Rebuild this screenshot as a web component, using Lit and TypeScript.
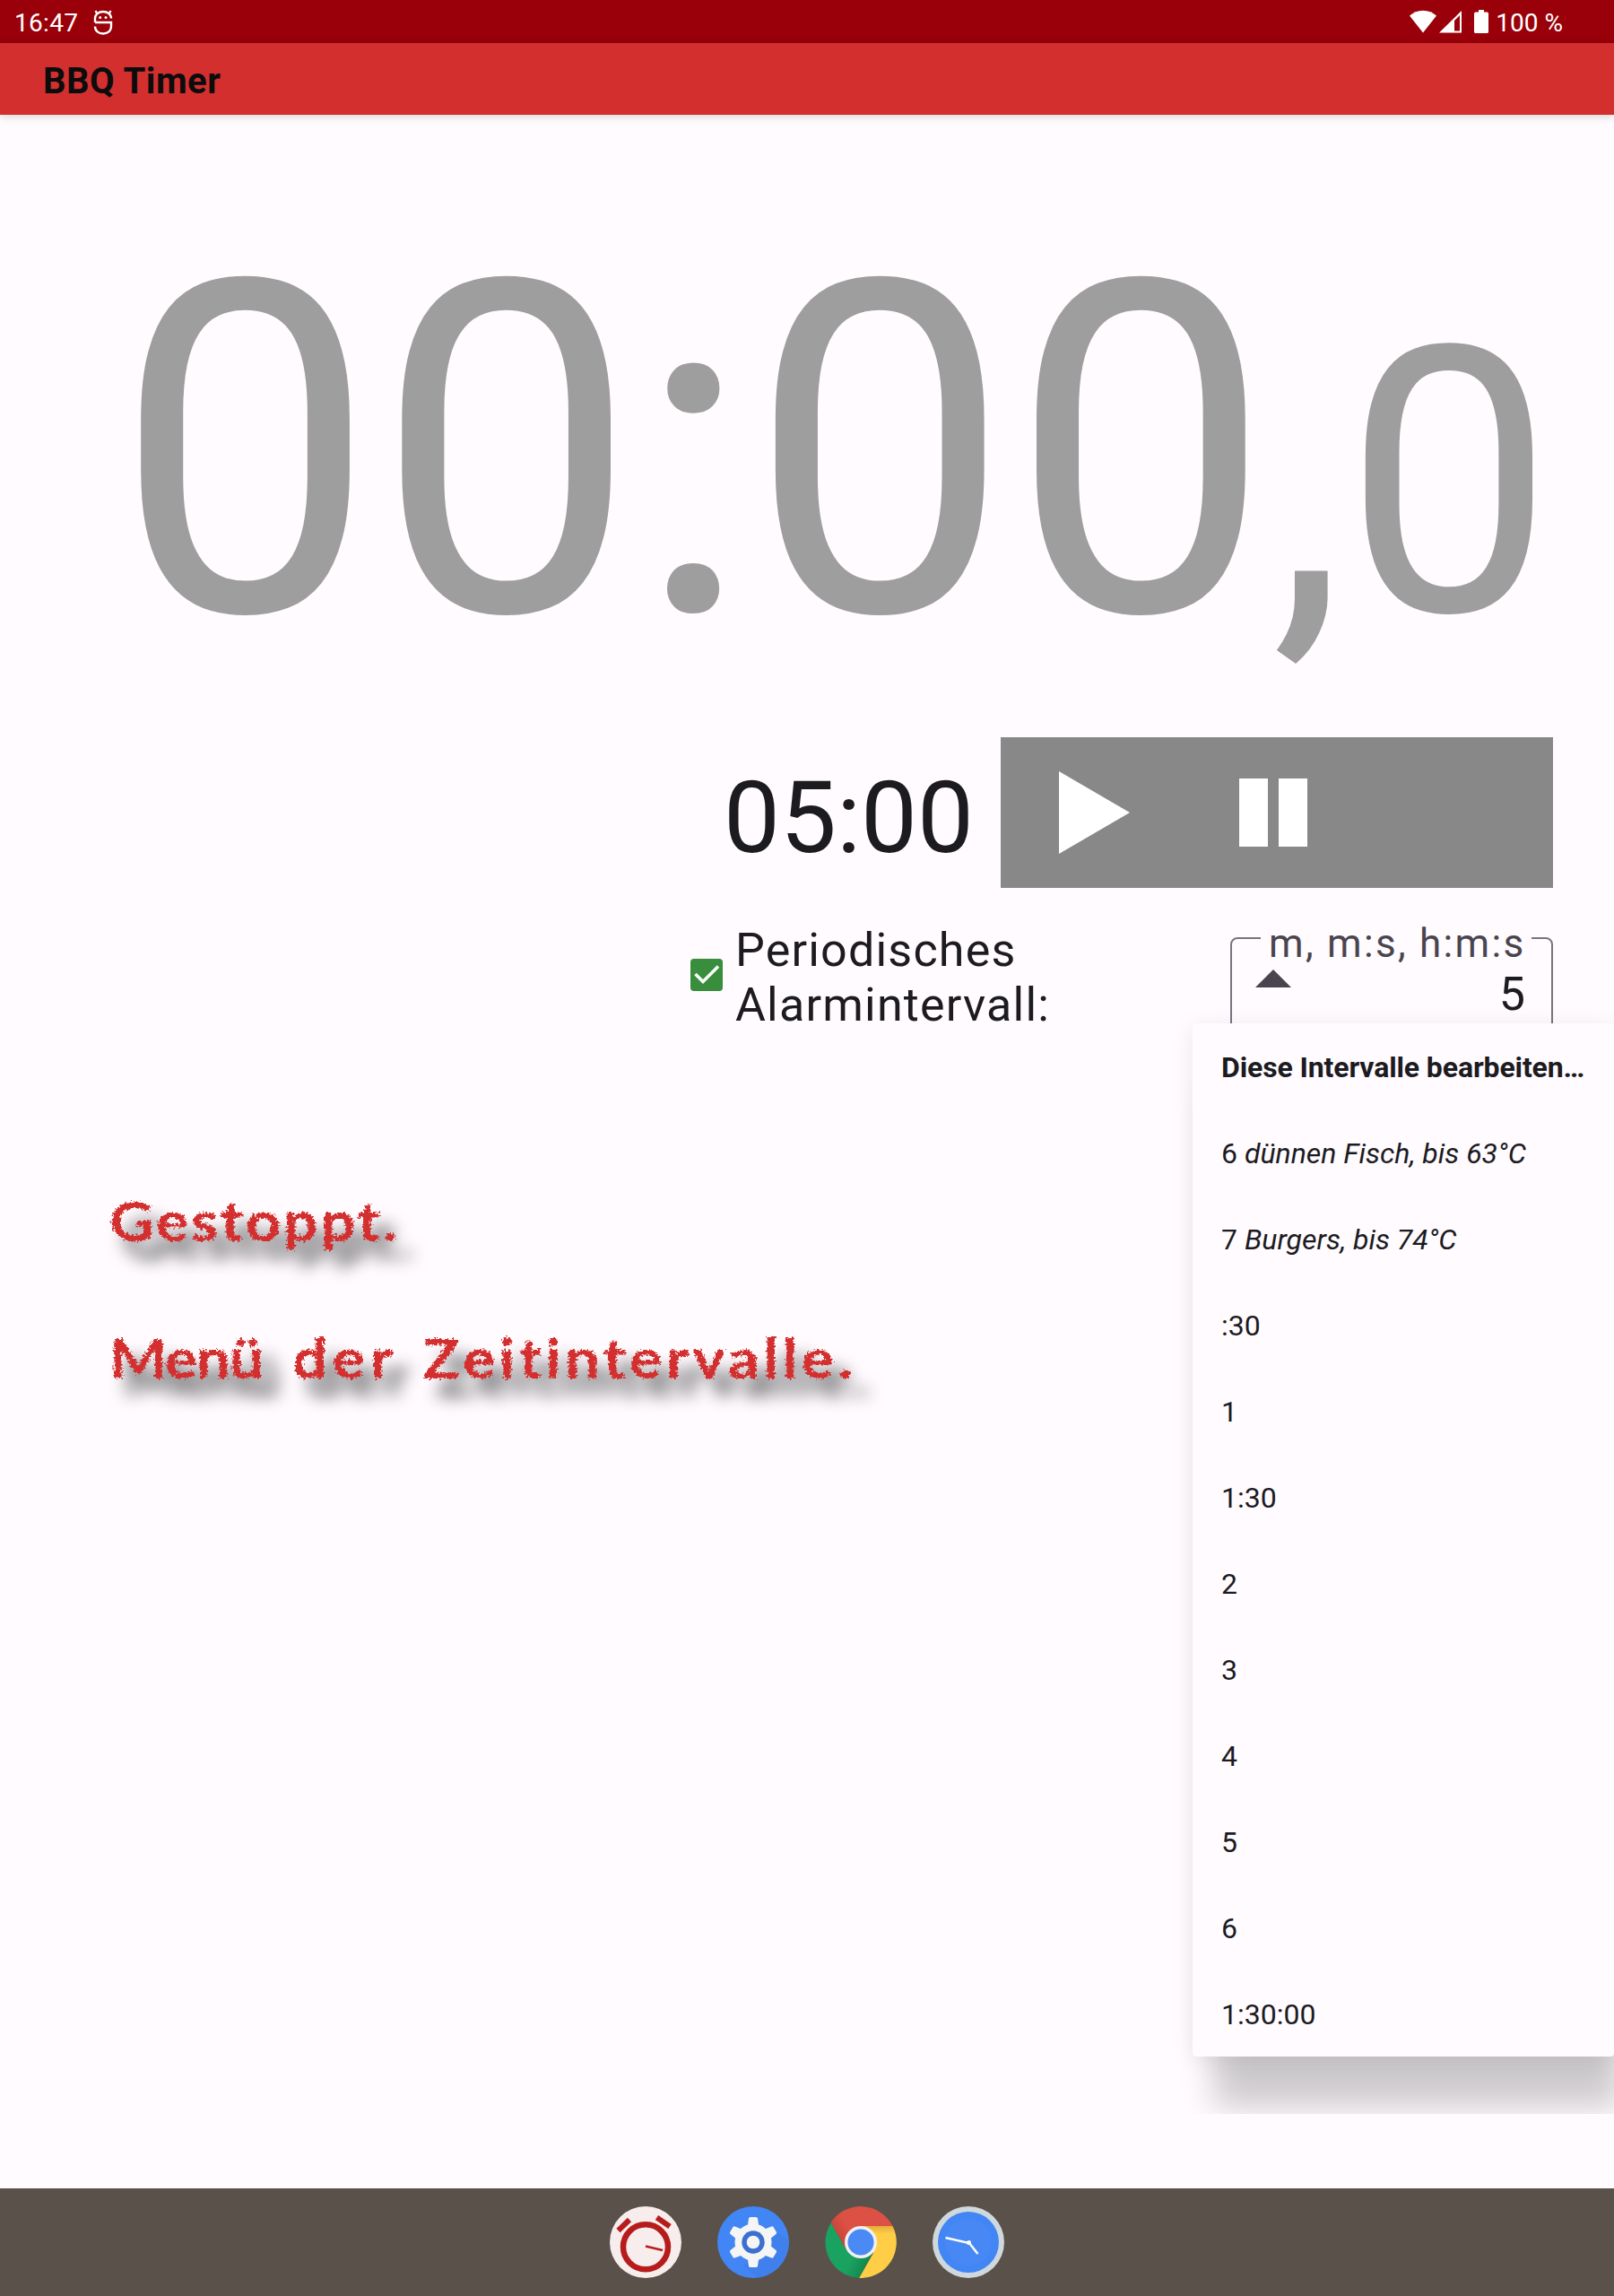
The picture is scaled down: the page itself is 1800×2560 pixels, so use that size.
import { LitElement, html, css, svg } from "lit";
import { customElement, property } from "lit/decorators.js";

@customElement("status-bar")
class StatusBar extends LitElement {
  static styles = css`
    :host { display: flex; align-items: center; height: 48px; background: #990009; color: #fff;
      font: 28px/48px Roboto, sans-serif; box-sizing: border-box; padding: 0 57px 0 16px; }
    .time { flex: none; margin-top: 3px; letter-spacing: .3px; }
    .debug { margin-left: 17px; margin-top: 1px; }
    .fill { flex: 1; }
    .icons { display: block; margin-right: 6px; }
    .pct { margin-top: 3px; }
  `;
  render() {
    return html`<span class="time">16:47</span>
      <svg class="debug" width="22" height="30" viewBox="0 0 22 30" fill="none" stroke="#fff" stroke-width="2.400">
        <path d="M2 15V10.500C2 6 6 3 11 3s9 3 9 7.500M4.500 5.500L2.500 2M17.500 5.500L19.500 2M2 15H20V19c0 5.500-4 8.500-9 8.500S2 24.500 2 19.500"/>
        <g fill="#fff" stroke="none"><circle cx="7.700" cy="9.500" r="1.500"/><circle cx="14" cy="9.500" r="1.500"/></g>
      </svg>
      <span class="fill"></span>
      <svg class="icons" width="90" height="28" viewBox="0 0 90 28" fill="#fff">
        <path d="M0 7.500C4 4 9 1.700 15 1.700S26 4 30 7.500L15 26.500Z"/>
        <path fill-rule="evenodd" d="M33 26.500L58 2V26.500ZM50 13V24.500H56V7Z"/>
        <path d="M77 1H83V3.500H86.500Q88 3.500 88 5V25.500Q88 27 86.500 27H73.500Q72 27 72 25.500V5Q72 3.500 73.500 3.500H77Z"/>
      </svg>
      <span class="pct">100 %</span>`;
  }
}

@customElement("interval-field")
class IntervalField extends LitElement {
  @property() label = "";
  @property() value = "";
  static styles = css`
    :host { display: block; width: 360px; height: 130px; font-family: Roboto, sans-serif; }
    .box { margin: 0; box-sizing: border-box; height: 140px; border: 2px solid #79747e; border-radius: 8px;
      min-width: 0; padding: 0 29px 0 26px; display: block; }
    .label { margin-left: 6px; padding: 12px 0 0 9px; width: 293px; color: #49454f;
      font-size: 44px; line-height: 52px; letter-spacing: 2.300px; white-space: nowrap; }
    .row { display: flex; justify-content: space-between; align-items: flex-start; }
    .arrow { margin-top: 3px; }
    .value { color: #1c1b1f; font-size: 52px; line-height: 61px; }
  `;
  render() {
    return html`<fieldset class="box"><legend class="label">${this.label}</legend>
      <div class="row"><svg class="arrow" width="40" height="20"><path d="M0 20L20 0L40 20Z" fill="#49454f"/></svg>
      <span class="value">${this.value}</span></div></fieldset>`;
  }
}

interface Item { text: string; note?: string; strong?: boolean }

@customElement("interval-menu")
class IntervalMenu extends LitElement {
  @property({ attribute: false }) items: Item[] = [];
  static styles = css`
    :host { display: block; width: 470px; border-radius: 4px; background: #fffbff; color: #1c1b1f;
      font: 32px/96px Roboto, sans-serif;
      box-shadow: 16px 64px 34px -8px rgba(0,0,0,.195), 0 4px 26px rgba(0,0,0,.085); }
    .item { height: 96px; padding: 1px 0 0 32px; box-sizing: border-box; white-space: nowrap; }
    .strong { font-weight: 700; letter-spacing: -.12px; }
  `;
  render() {
    return this.items.map(i => html`<div class="item ${i.strong ? "strong" : ""}">${i.text}${i.note ? html` <i>${i.note}</i>` : ""}</div>`);
  }
}

const alarmIcon = svg`<circle cx="40" cy="40" r="40" fill="#f6edec"/>
  <g fill="none" stroke="#b71c1c"><circle cx="40" cy="45.300" r="25" stroke-width="6.500"/>
  <path d="M9.500 27L22 15M52.500 12.500L67 22.500" stroke-width="6"/><path d="M40 44.500L59 49" stroke-width="2.600"/></g>`;

const tooth = "M33.500 24L35 13.500Q35.300 12 37 12H43Q44.700 12 45 13.500L46.500 24Z";
const gearIcon = svg`<circle cx="40" cy="40" r="40" fill="#4285f4"/>
  <path d="M67 29L79.500 38A40 40 0 0 1 45 79.700L29 66Z" fill="#3f7de6" opacity=".6"/>
  <g fill="#f5f5f5">${[0, 60, 120, 180, 240, 300].map(a => svg`<path d=${tooth} transform="rotate(${a} 40 40)"/>`)}
  <circle cx="40" cy="40" r="20.500"/></g>
  <circle cx="40" cy="40" r="12.700" fill="#3b6fd0"/><circle cx="40" cy="40" r="7.300" fill="#f5f5f5"/>`;

const chromeIcon = svg`<defs>
    <linearGradient id="r" x1="0" y1=".5" x2=".5" y2=".3"><stop stop-color="#c5443a"/><stop offset=".5" stop-color="#dd5044"/></linearGradient>
    <linearGradient id="g" x1=".6" y1=".5" x2="1" y2=".7"><stop stop-color="#1aa260"/><stop offset="1" stop-color="#118347"/></linearGradient>
    <linearGradient id="y" x1="0" y1="0" x2="0" y2="1"><stop stop-color="#e5ae37"/><stop offset=".15" stop-color="#ffcd46"/></linearGradient>
  </defs>
  <path d="M6.500 18A40 40 0 0 1 75.500 22H40L24 49Z" fill="url(#r)"/>
  <path d="M75.500 22A40 40 0 0 1 38 80L54 52L40 22Z" fill="url(#y)"/>
  <path d="M6.800 18.500A40 40 0 0 0 38 80L54 51L40 57L24 49Z" fill="url(#g)"/>
  <circle cx="40" cy="40" r="18" fill="#f1f1f1"/><circle cx="40" cy="40" r="14.600" fill="#4a8af4"/>`;

const clockIcon = svg`<circle cx="40" cy="40" r="40" fill="#cfd8dc"/><circle cx="40" cy="40" r="34" fill="#4285f4"/>
  <circle cx="40" cy="40" r="26" fill="#fff" opacity=".03"/>
  <path d="M14.500 35L41 41L50.500 53" fill="none" stroke="#fff" stroke-width="2.500"/><circle cx="40.500" cy="40.500" r="2.500" fill="#fff"/>`;

@customElement("app-dock")
class AppDock extends LitElement {
  static styles = css`
    :host { display: flex; justify-content: center; align-items: center; gap: 40px; height: 120px; background: #5a514a; }
    .icon { display: block; }
  `;
  render() {
    return [alarmIcon, gearIcon, chromeIcon, clockIcon].map(i => html`<svg class="icon" width="80" height="80" viewBox="0 0 80 80">${i}</svg>`);
  }
}

@customElement("app-root")
class AppRoot extends LitElement {
  static styles = css`
    :host { display: flex; flex-direction: column; position: relative; width: 1800px; height: 2560px; overflow: hidden;
      background: #fffbff; color: #1c1b1f; font-family: Roboto, sans-serif; }
    .appbar { height: 80px; background: #d32f2f; color: #0c0c0c; font-size: 40px; font-weight: 700; line-height: 86px;
      letter-spacing: .5px; padding-left: 48px; box-shadow: 0 2px 9px rgba(0,0,0,.16); }
    .main { flex: 1; display: flex; flex-direction: column; min-height: 0; }
    .clock { height: 694px; padding-right: 67.500px; text-align: right; white-space: nowrap; color: #9e9e9e; font-size: 518px;
      line-height: 751px; }
    .tenths { font-size: 414.400px; }
    .controls { display: flex; justify-content: flex-end; align-items: stretch; height: 168px; padding-right: 68px; }
    .remain { font-size: 112px; line-height: 179px; margin-right: 30px; }
    .buttons { width: 616px; background: #888; display: flex; align-items: center; }
    .play { margin-left: 64.500px; }
    .pause { margin-left: 122.500px; }
    .periodic { display: flex; height: 320px; padding: 38px 68px 0 770px; align-items: flex-start; box-sizing: border-box; }
    .check { margin-top: 41px; flex: none; }
    .plabel { width: 420px; margin: 1px auto 0 14px; font-size: 52px; line-height: 61px; letter-spacing: 1.200px; }
    .field { margin-top: -14px; }
    .messages { padding: 5px 0 0 122px; }
    .msg { height: 153px; line-height: 90px; font-family: Lato, sans-serif; font-weight: 700; font-size: 62px; color: #d32f2f;
      white-space: nowrap; display: flex; transform: scaleX(1.1); transform-origin: 0 0; width: 1000px;
      filter: url(#chalk) drop-shadow(15.500px 20px 9px rgba(0,0,0,.7)); }
    .g { letter-spacing: 2.600px; } .m { width: 186px; letter-spacing: -1.400px; } .d { width: 132px; letter-spacing: 5px; } .z { letter-spacing: 4px; }
    .defs { position: absolute; width: 0; height: 0; }
    .layer { position: absolute; left: 0; right: 0; top: 128px; height: 2229px; overflow: hidden; pointer-events: none; }
    .menu { position: absolute; left: 1330px; top: 1013px; }
  `;
  private items: Item[] = [
    { text: "Diese Intervalle bearbeiten…", strong: true },
    { text: "6", note: "dünnen Fisch, bis 63°C" },
    { text: "7", note: "Burgers, bis 74°C" },
    ...[":30", "1", "1:30", "2", "3", "4", "5", "6", "1:30:00"].map(text => ({ text })),
  ];
  render() {
    return html`
      <status-bar></status-bar>
      <div class="appbar">BBQ Timer</div>
      <div class="main">
        <div class="clock">00:00<span class="tenths">,0</span></div>
        <div class="controls">
          <div class="remain">05:00</div>
          <div class="buttons">
            <svg class="play" width="79" height="92"><path d="M0 0L79 46L0 92Z" fill="#fff"/></svg>
            <svg class="pause" width="76" height="76"><path d="M0 0H32V76H0ZM44 0H76V76H44Z" fill="#fff"/></svg>
          </div>
        </div>
        <div class="periodic">
          <svg class="check" width="36" height="36"><rect width="36" height="36" rx="4" fill="#388e3c"/><path d="M5.500 17L14 25.500L31 8.500" fill="none" stroke="#fff" stroke-width="3.500"/></svg>
          <div class="plabel">Periodisches Alarmintervall:</div>
          <interval-field class="field" label="m, m:s, h:m:s" value="5"></interval-field>
        </div>
        <div class="messages">
          <div class="msg"><span class="g">Gestoppt.</span></div>
          <div class="msg"><span class="m">Menü</span><span class="d">der</span><span class="z">Zeitintervalle.</span></div>
        </div>
      </div>
      <app-dock></app-dock>
      <div class="layer"><interval-menu class="menu" .items=${this.items}></interval-menu></div>
      <svg class="defs"><filter id="chalk" x="-5%" y="-20%" width="110%" height="140%" color-interpolation-filters="sRGB">
        <feTurbulence type="fractalNoise" baseFrequency=".4" numOctaves="2" seed="4" result="n"/>
        <feDisplacementMap in="SourceGraphic" in2="n" scale="8" xChannelSelector="R" yChannelSelector="G"/>
      </filter></svg>`;
  }
}
